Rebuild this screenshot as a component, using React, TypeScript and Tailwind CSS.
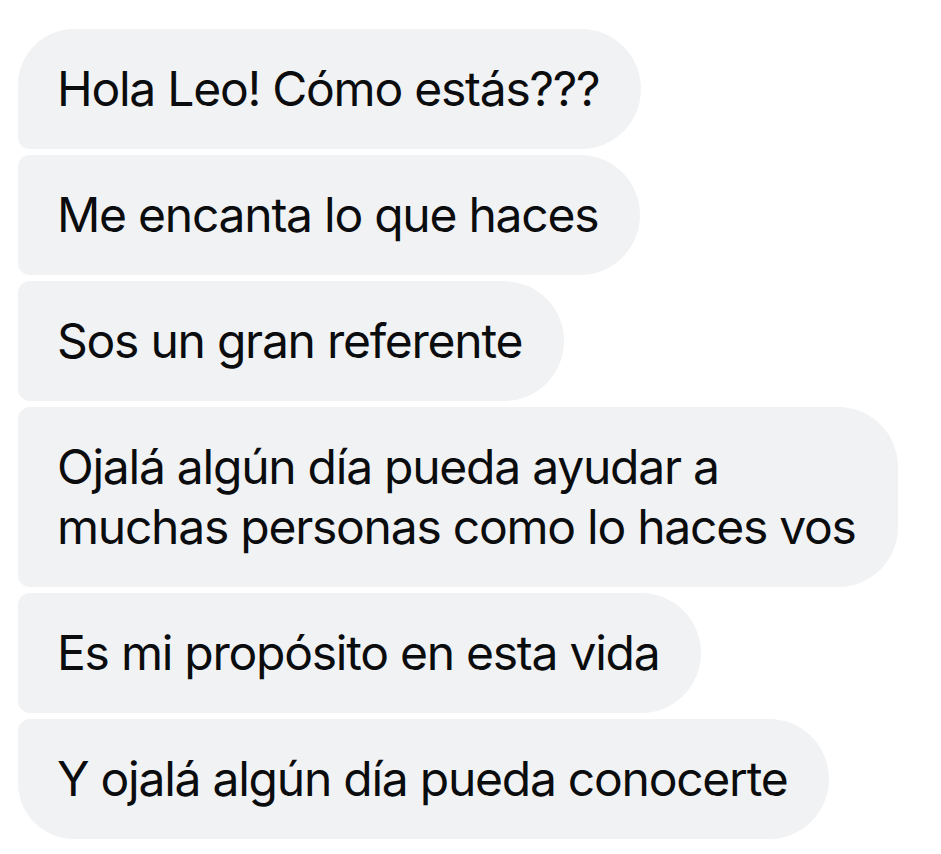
import React from "react";

const msgs: { t: React.ReactNode; r: string }[] = [
  { t: "Hola Leo! Cómo estás???", r: "rounded-tl-[56px] rounded-bl-[12px]" },
  { t: "Me encanta lo que haces", r: "rounded-tl-[12px] rounded-bl-[12px]" },
  { t: "Sos un gran referente", r: "rounded-tl-[12px] rounded-bl-[12px]" },
  {
    t: (
      <>
        Ojalá algún día pueda ayudar a<br />
        muchas personas como lo haces vos
      </>
    ),
    r: "rounded-tl-[12px] rounded-bl-[12px]",
  },
  { t: "Es mi propósito en esta vida", r: "rounded-tl-[12px] rounded-bl-[12px]" },
  { t: "Y ojalá algún día pueda conocerte", r: "rounded-tl-[12px] rounded-bl-[56px]" },
];

export default function App() {
  return (
    <div className="w-[941px] h-[854px] bg-white overflow-hidden">
      <div className="flex flex-col items-start gap-[6px] pt-[29px] pl-[18px]">
        {msgs.map((m, i) => (
          <div
            key={i}
            className={`bg-[#f1f2f4] text-[#0b0c0e] pl-[39px] pr-[42px] py-[30px] rounded-r-[60px] ${m.r} text-[48px] leading-[60px] tracking-[-1.25px]`}
            style={{ fontFamily: "Inter, 'Noto Sans', sans-serif" }}
          >
            {m.t}
          </div>
        ))}
      </div>
    </div>
  );
}
